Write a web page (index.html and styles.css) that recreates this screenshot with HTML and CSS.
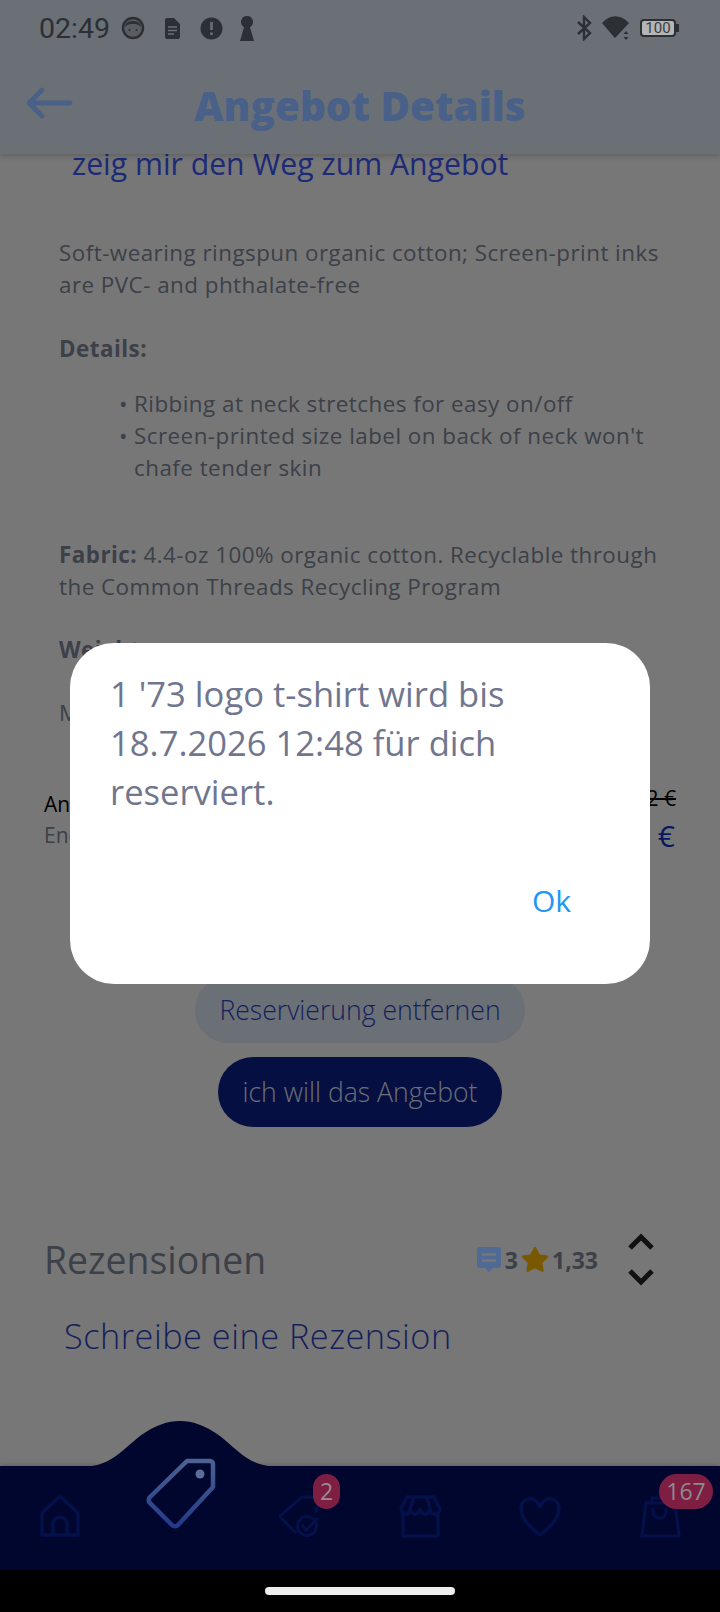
FILE: index.html
```html
<!DOCTYPE html>
<html lang="de">
<head>
    <meta charset="UTF-8">
    <meta name="viewport" content="width=device-width, initial-scale=1.0">
    <title>Angebot Details</title>
    <link rel="stylesheet" href="styles.css">
</head>
<body>

<div class="screen">
    <header class="top">
        <div class="statusbar">
            <span class="clock">02:49</span>
            <svg class="si" width="24" height="24" viewBox="0 0 24 24"><circle cx="12" cy="12" r="10" fill="#5a5e63" stroke="#2c2f33" stroke-width="2.400"/><path d="M4 11C4 3 20 3 20 11c-3-3-5-3-8-3s-5 0-8 3z" fill="#2c2f33"/><circle cx="8.500" cy="14" r="1" fill="#2c2f33"/><circle cx="15.500" cy="14" r="1" fill="#2c2f33"/></svg>
            <svg class="si si-doc" width="15" height="21" viewBox="0 0 15 21"><path d="M2 0h7l6 6v13a2 2 0 0 1-2 2H2a2 2 0 0 1-2-2V2a2 2 0 0 1 2-2z" fill="#2c2f33"/><path d="M3 9h9M3 12.500h9M3 16h6" stroke="#6b7077" stroke-width="1.300"/></svg>
            <svg class="si" width="23" height="23" viewBox="0 0 23 23"><circle cx="11.500" cy="11.500" r="11" fill="#2c2f33"/><path d="M11.500 5v8M11.500 15.500v2.500" stroke="#6b7077" stroke-width="2.600"/></svg>
            <svg class="si" width="16" height="25" viewBox="0 0 16 25"><path d="M8 0a6 6 0 0 1 3 11.200L15 25H1l4-13.800A6 6 0 0 1 8 0z" fill="#2c2f33"/></svg>
            <span class="status-right">
                <svg class="bt" width="18" height="26" viewBox="0 0 18 26"><path d="M3 7l12 11-6 6V2l6 6L3 19" fill="none" stroke="#2c2f33" stroke-width="2.400"/></svg>
                <svg width="29" height="25" viewBox="0 0 29 25"><path d="M1 7C6 2 9 1 13 1s8 1 13 6L13 21z" fill="#2c2f33" stroke="#2c2f33" stroke-width="1.500" stroke-linejoin="round"/><path d="M24 15l2.500 3h-5zM24 24l2.500-3h-5z" fill="#2c2f33"/></svg>
                <span class="battery"><span class="battery-level">100</span></span>
            </span>
        </div>
        <div class="appbar">
            <svg class="back" width="48" height="36" viewBox="0 0 48 36"><path d="M45 18H5M17 5L4 18l13 13" fill="none" stroke="#496088" stroke-width="4.800" stroke-linecap="round" stroke-linejoin="round"/></svg>
            <h1>Angebot Details</h1>
        </div>
    </header>

    <main class="content">
        <a class="way-link">zeig mir den Weg zum Angebot</a>

        <section class="description">
            <p>Soft-wearing ringspun organic cotton; Screen-print inks are PVC- and phthalate-free</p>
            <p class="details-title"><b>Details:</b></p>
            <ul>
                <li>Ribbing at neck stretches for easy on/off</li>
                <li>Screen-printed size label on back of neck won't chafe tender skin</li>
            </ul>
            <p><b>Fabric:</b> 4.4-oz 100% organic cotton. Recyclable through the Common Threads Recycling Program</p>
            <p><b>Weight:</b></p>
            <p class="made">Made in</p>
        </section>

        <div class="price-row">
            <span class="price-label">Angebot</span>
            <s class="price-old">12 €</s>
        </div>
        <div class="price-row price-row-second">
            <span class="price-sub">Endpreis</span>
            <span class="price-new">9 €</span>
        </div>

        <div class="actions">
            <button class="btn btn-light">Reservierung entfernen</button>
            <button class="btn btn-dark">ich will das Angebot</button>
        </div>

        <div class="reviews-head">
            <h2>Rezensionen</h2>
            <div class="review-stats">
                <svg width="26" height="28" viewBox="0 0 26 28"><path d="M4 1h18a3 3 0 0 1 3 3v15a3 3 0 0 1-3 3h-5l-4 4-4-4H4a3 3 0 0 1-3-3V4a3 3 0 0 1 3-3z" fill="#506a95"/><path d="M6 8.500h14M6 14.500h14" stroke="#777" stroke-width="2.600"/></svg>
                <b>3</b>
                <svg width="28" height="27" viewBox="0 0 28 27"><path d="M14 2l3.700 7.500 8.300 1.200-6 5.800 1.400 8.200-7.400-3.900-7.400 3.900L8 16.500 2 10.700l8.300-1.200z" fill="#7a5800" stroke="#7a5800" stroke-width="2.500" stroke-linejoin="round"/></svg>
                <b>1,33</b>
            </div>
            <div class="sort">
                <svg width="28" height="18" viewBox="0 0 28 18"><path d="M3 15L14 4l11 11" fill="none" stroke="#111" stroke-width="5"/></svg>
                <svg width="28" height="18" viewBox="0 0 28 18"><path d="M3 3l11 11L25 3" fill="none" stroke="#111" stroke-width="5"/></svg>
            </div>
        </div>
        <a class="write-review">Schreibe eine Rezension</a>
    </main>

    <nav class="tabbar">
        <svg class="hump" width="200" height="46" viewBox="0 0 200 46"><path d="M0 46C30 46 40 31 60 15 75 4 88 0 100 0s25 4 40 15c20 16 30 31 60 31z" fill="#00062e"/></svg>
        <svg class="tab-main" width="74" height="74" viewBox="0 0 74 74">
            <defs><linearGradient id="tagStroke" x1="0" y1="0" x2="0" y2="1"><stop offset="0" stop-color="#4c6291"/><stop offset="1" stop-color="#23398a"/></linearGradient></defs>
            <path d="M42 4h23a3 3 0 0 1 3 3v23L33 68a4 4 0 0 1-6 0L5 46a4 4 0 0 1 0-6z" fill="none" stroke="url(#tagStroke)" stroke-width="4.500" stroke-linejoin="round"/>
            <circle cx="55" cy="17" r="4.500" fill="#5a6e97"/>
        </svg>
        <div class="tab"><svg width="44" height="44" viewBox="0 0 44 44"><path d="M4 40V19a3 3 0 0 1 1-2L20 3a3 3 0 0 1 4 0l15 14a3 3 0 0 1 1 2v21zM15 40V29a7 7 0 0 1 14 0v11" fill="none" stroke="#04104a" stroke-width="3.500" stroke-linejoin="round"/></svg></div>
        <div class="tab-gap"></div>
        <div class="tab"><svg width="44" height="44" viewBox="0 0 44 44"><path d="M24 2h12l4 6-2 10M18 38L3 23a2 2 0 0 1 0-3L24 2" fill="none" stroke="#04104a" stroke-width="3" stroke-linejoin="round"/><circle cx="29" cy="31" r="9.500" fill="#00062e" stroke="#04104a" stroke-width="3"/><path d="M24 30l4 5 12-12" fill="none" stroke="#04104a" stroke-width="3"/></svg><span class="badge">2</span></div>
        <div class="tab"><svg width="44" height="44" viewBox="0 0 44 44"><path d="M5 17v24h35V17M3 14L9 2h27l6 12c-2 7-9 7-10 0-2 7-8 7-10 0-2 7-8 7-10 0-1 7-7 7-9 0zM16 2l-4 12M29 2l3 12" fill="none" stroke="#04104a" stroke-width="3.500" stroke-linejoin="round"/></svg></div>
        <div class="tab"><svg width="44" height="44" viewBox="0 0 44 44"><path d="M22 40C12 32 3 24 3 13 3 3 17-1 22 12 27-1 41 3 41 13c0 11-9 19-19 27z" fill="none" stroke="#04104a" stroke-width="3.500" stroke-linejoin="round"/></svg></div>
        <div class="tab"><svg width="44" height="44" viewBox="0 0 44 44"><path d="M8 8h29l4 33H4zM14 8V3h14M15 13v4c0 8 13 8 13 0v-4" fill="none" stroke="#04104a" stroke-width="3.200"/></svg><span class="badge badge-wide">167</span></div>
    </nav>

    <div class="gesture-area"><span class="gesture-pill"></span></div>

    <div class="dialog">
        <p class="dialog-text">1 '73 logo t-shirt wird bis 18.7.2026 12:48 für dich reserviert.</p>
        <div class="dialog-actions"><span class="dialog-ok">Ok</span></div>
    </div>
</div>

</body>
</html>
```

FILE: styles.css
```css
* {
    box-sizing: border-box;
}
html, body {
    margin: 0;
    padding: 0;
}
body {
    font-family: "Open Sans", sans-serif;
    background-color: #777777;
}
.screen {
    position: relative;
    width: 720px;
    height: 1612px;
    overflow: hidden;
    display: flex;
    flex-direction: column;
}

/* header */
.top {
    height: 154px;
    flex: none;
    background-color: #6b7077;
    box-shadow: 0 2px 6px rgba(0, 0, 0, 0.2);
    position: relative;
    z-index: 1;
}
.statusbar {
    height: 56px;
    padding: 0 44px 0 39px;
    display: flex;
    align-items: center;
    gap: 16px;
}
.clock {
    font-family: Roboto, sans-serif;
    font-size: 28.5px;
    color: #2c2f33;
    margin-right: -5px;
}
.si-doc {
    margin: 0 4px;
}
.status-right {
    margin-left: auto;
    display: flex;
    align-items: center;
    gap: 6px;
}
.bt {
    margin-right: 3px;
}
.battery {
    position: relative;
    width: 36px;
    height: 18px;
    margin-left: 3px;
    border: 2px solid #2c2f33;
    border-radius: 4px;
    display: block;
    background-color: #b5b5b5;
}
.battery::after {
    content: "";
    position: absolute;
    right: -5px;
    top: 3px;
    width: 3px;
    height: 8px;
    background-color: #2c2f33;
}
.battery-level {
    display: block;
    font-family: Roboto, sans-serif;
    font-size: 15px;
    line-height: 14px;
    text-align: center;
    color: #3a3d41;
}
.appbar {
    height: 98px;
    position: relative;
    display: flex;
    align-items: center;
    justify-content: center;
}
.back {
    position: absolute;
    left: 25px;
    top: 29px;
}
h1 {
    margin: 0;
    font-size: 40.3px;
    font-weight: 800;
    color: #496088;
}

/* scrolled content */
.content {
    flex: 1;
    min-height: 0;
    padding: 0 44px;
}
.way-link {
    display: block;
    margin-top: -9px;
    margin-left: 28px;
    font-size: 30.2px;
    line-height: 38px;
    color: #1c2a78;
}
.description {
    margin-top: 54px;
    padding: 0 15px;
    font-size: 22.4px;
    line-height: 32px;
    letter-spacing: 0.47px;
    color: #3c4048;
}
.description p {
    margin: 0 0 31px;
}
.description .details-title {
    margin-top: 32px;
    margin-bottom: 23px;
}
.description ul {
    margin: 0 0 55px;
    padding-left: 0;
    list-style: none;
}
.description li {
    padding-left: 75px;
    position: relative;
}
.description li::before {
    content: "•";
    position: absolute;
    left: 60px;
}
.description .made {
    margin-bottom: 0;
}
.price-row {
    display: flex;
    justify-content: space-between;
    margin-top: 61px;
}
.price-row-second {
    margin-top: 3px;
}
.price-label {
    font-size: 21px;
    color: #000;
}
.price-old {
    font-size: 21px;
    color: #000;
    margin-top: -6px;
}
.price-sub {
    font-size: 21px;
    color: #3c4048;
}
.price-new {
    margin-top: -3px;
    margin-right: 1px;
    font-size: 30px;
    line-height: 36px;
    word-spacing: 6px;
    color: #091760;
}
.actions {
    margin-top: 123px;
    display: flex;
    flex-direction: column;
    align-items: center;
    gap: 14px;
}
.btn {
    font-family: inherit;
    border: none;
    font-size: 26.6px;
    font-weight: 300;
    height: 66px;
    border-radius: 33px;
}
.btn-light {
    width: 330px;
    background-color: #6b7077;
    color: #141f5c;
}
.btn-dark {
    width: 284px;
    height: 70px;
    border-radius: 35px;
    background-color: #060f42;
    color: #6b7077;
}
.reviews-head {
    margin-top: 106px;
    display: flex;
    align-items: center;
}
h2 {
    margin: 0;
    font-size: 37.4px;
    font-weight: 400;
    color: #3c4048;
}
.review-stats {
    margin-left: auto;
    display: flex;
    align-items: center;
    gap: 3px;
    font-size: 23px;
    color: #3c4048;
}
.sort {
    margin-left: 29px;
    margin-right: 21px;
    display: flex;
    flex-direction: column;
    gap: 17px;
}
.write-review {
    display: block;
    margin-top: 26px;
    margin-left: 20px;
    font-size: 34.3px;
    font-weight: 300;
    color: #141f5c;
    letter-spacing: 0.5px;
}

/* bottom navigation */
.tabbar {
    flex: none;
    height: 104px;
    background-color: #00062e;
    box-shadow: 0 -2px 3px rgba(0, 0, 0, 0.15);
    position: relative;
    display: grid;
    grid-template-columns: repeat(6, 120px);
    justify-items: center;
    padding-top: 29px;
}
.hump {
    position: absolute;
    left: 80px;
    top: -45px;
}
.tab-main {
    position: absolute;
    left: 145px;
    top: -9px;
}
.tab {
    position: relative;
    width: 44px;
    height: 44px;
}
.badge {
    position: absolute;
    left: 35px;
    top: -21px;
    width: 27px;
    height: 35px;
    border-radius: 14px;
    background-color: #7e1e43;
    color: #9c8a8e;
    font-size: 23px;
    line-height: 35px;
    text-align: center;
}
.badge-wide {
    left: 21px;
    width: 54px;
    border-radius: 18px;
    color: #8f8a8a;
}
.gesture-area {
    flex: none;
    height: 42px;
    background-color: #000;
    display: flex;
    justify-content: center;
    padding-top: 17px;
}
.gesture-pill {
    width: 190px;
    height: 8px;
    border-radius: 4px;
    background-color: #eee;
}

/* dialog lying over the page */
.dialog {
    position: absolute;
    left: 70px;
    top: 643px;
    width: 580px;
    height: 341px;
    padding: 26px 40px;
    border-radius: 44px;
    background-color: #fff;
    z-index: 2;
}
.dialog-text {
    margin: 0;
    font-size: 34.6px;
    line-height: 49px;
    color: #70768e;
}
.dialog-actions {
    margin-top: 64px;
    display: flex;
    justify-content: flex-end;
}
.dialog-ok {
    margin-right: 39px;
    font-size: 30px;
    color: #2196f3;
}
```
